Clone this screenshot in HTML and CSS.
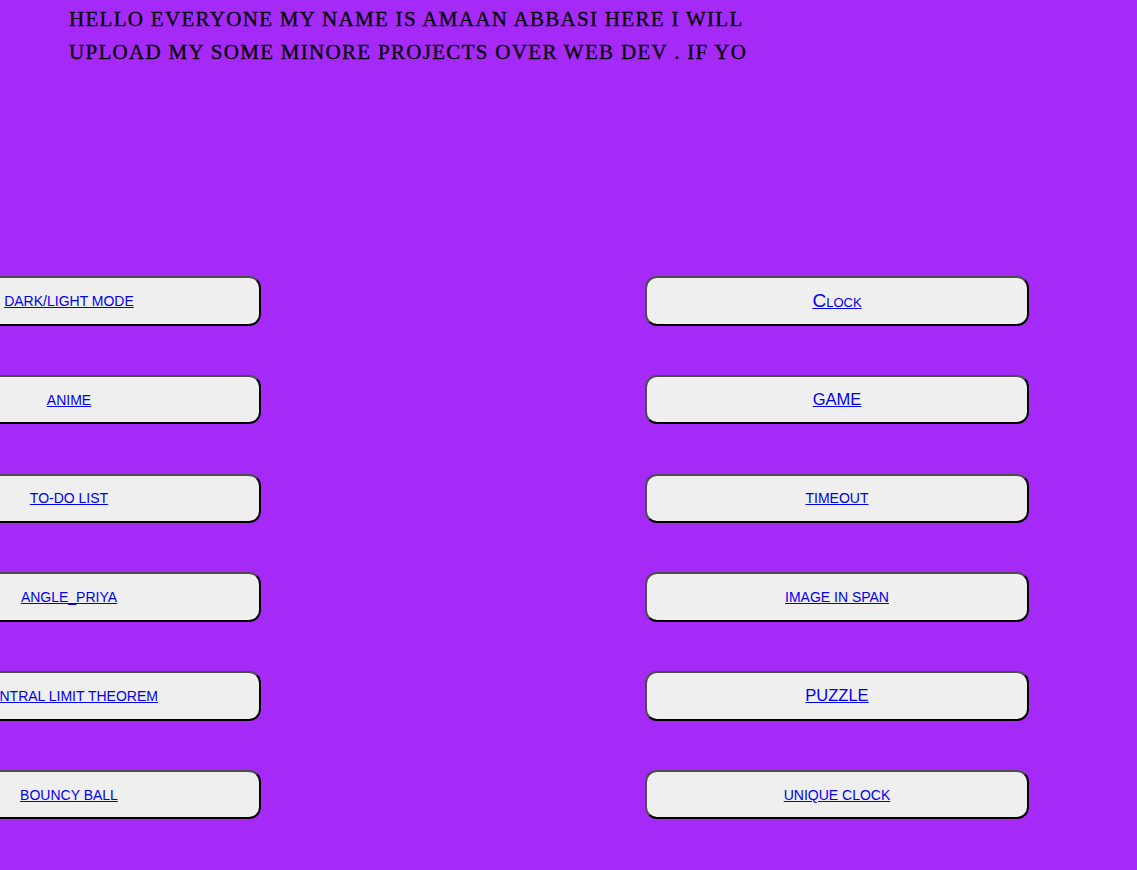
FILE: index.html
```html
<!DOCTYPE html>
<html lang="en">
<head>
<meta charset="utf-8">
<title>Projects</title>
<link rel="stylesheet" href="styles.css">
</head>
<body>
<header class="intro">
  <h1 class="intro-text"><span class="line">HELLO EVERYONE MY NAME IS AMAAN ABBASI HERE I WILL</span><span class="line">UPLOAD MY SOME MINORE PROJECTS OVER WEB DEV . IF YO</span></h1>
</header>
<main class="projects">
  <div class="btn"><a href="#">DARK/LIGHT MODE</a></div>
  <div class="btn"><a href="#" class="caps">Clock</a></div>
  <div class="btn"><a href="#">ANIME</a></div>
  <div class="btn"><a href="#" class="big">GAME</a></div>
  <div class="btn"><a href="#">TO-DO LIST</a></div>
  <div class="btn"><a href="#">TIMEOUT</a></div>
  <div class="btn"><a href="#">ANGLE_PRIYA</a></div>
  <div class="btn"><a href="#">IMAGE IN SPAN</a></div>
  <div class="btn"><a href="#">CENTRAL LIMIT THEOREM</a></div>
  <div class="btn"><a href="#" class="big">PUZZLE</a></div>
  <div class="btn"><a href="#">BOUNCY BALL</a></div>
  <div class="btn"><a href="#">UNIQUE CLOCK</a></div>
</main>
</body>
</html>
```
FILE: styles.css
```css
html, body {
  margin: 0;
  padding: 0;
}
body {
  background: #a62af7;
  overflow: hidden;
  height: 870px;
}
.intro {
  padding: 3px 0 0 69px;
}
.intro-text {
  margin: 0;
  font-family: "Liberation Serif", serif;
  font-weight: normal;
  font-size: 21px;
  line-height: 33px;
  letter-spacing: 1.3px;
  color: #000;
  -webkit-text-stroke: 0.3px #000;
}
.line {
  display: block;
  white-space: nowrap;
}
.projects {
  display: grid;
  grid-template-columns: 384px 384px;
  column-gap: 384px;
  row-gap: 49.3px;
  margin: 207px 0 0 -123px;
}
.btn {
  height: 49.5px;
  box-sizing: border-box;
  display: flex;
  align-items: center;
  justify-content: center;
  background: #efefef;
  border: 2px solid;
  border-color: #4d4d4d #000 #000 #4d4d4d;
  border-radius: 12px;
  font-family: "Liberation Sans", Arial, sans-serif;
  font-size: 14px;
  white-space: nowrap;
}
.btn a {
  color: #0000ee;
  text-decoration: underline;
}
.btn a.big {
  font-size: 16.5px;
}
.btn a.caps {
  font-size: 19px;
  font-variant: small-caps;
}
```
